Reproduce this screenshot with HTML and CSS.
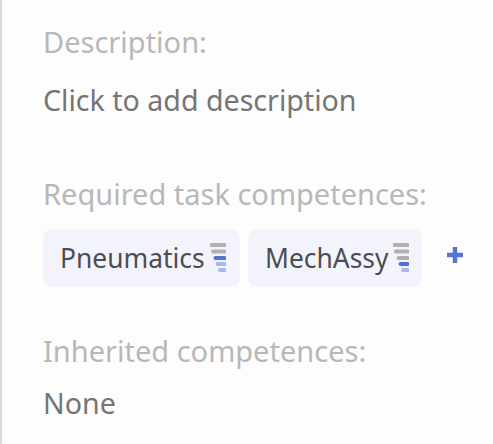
FILE: index.html
```html
<!DOCTYPE html>
<html lang="en">
<head>
<meta charset="utf-8">
<title>Task details</title>
<link rel="stylesheet" href="styles.css">
</head>
<body>
<main class="panel">
  <section class="block block-description">
    <h2 class="label">Description:</h2>
    <p class="value">Click to add description</p>
  </section>
  <section class="block block-required">
    <h2 class="label">Required task competences:</h2>
    <div class="chips">
      <div class="chip chip-first">
        <span class="chip-name">Pneumatics</span>
        <svg class="level" viewBox="0 0 16 32" aria-hidden="true">
          <line class="off" x1="1.5" y1="3" x2="14.5" y2="3"/>
          <line class="off" x1="3" y1="9.5" x2="14.5" y2="9.5"/>
          <line class="on" x1="5.5" y1="16" x2="14.5" y2="16"/>
          <line class="next" x1="7.5" y1="22" x2="14.5" y2="22"/>
          <line class="next" x1="10" y1="28" x2="14.5" y2="28"/>
        </svg>
      </div>
      <div class="chip chip-second">
        <span class="chip-name">MechAssy</span>
        <svg class="level" viewBox="0 0 16 32" aria-hidden="true">
          <line class="off" x1="1.5" y1="3" x2="14.5" y2="3"/>
          <line class="off" x1="3" y1="9.5" x2="14.5" y2="9.5"/>
          <line class="off" x1="5.5" y1="16" x2="14.5" y2="16"/>
          <line class="on" x1="7.5" y1="22" x2="14.5" y2="22"/>
          <line class="next" x1="10" y1="28" x2="14.5" y2="28"/>
        </svg>
      </div>
      <svg class="add" viewBox="0 0 18 18" aria-hidden="true">
        <path d="M9 1v16M1 9h16"/>
      </svg>
    </div>
  </section>
  <section class="block block-inherited">
    <h2 class="label">Inherited competences:</h2>
    <p class="value">None</p>
  </section>
</main>
</body>
</html>
```

FILE: styles.css
```css
* { box-sizing: border-box; }
html, body { margin: 0; height: 100%; }
body {
  background: #fdfdfd;
  font-family: "Noto Sans", "Open Sans", sans-serif;
  overflow: hidden;
}
.panel {
  height: 444px;
  border-left: 2px solid #d8d8d8;
  padding: 23px 0 0 41px;
}
.label {
  margin: 0;
  font-size: 29px;
  line-height: 38px;
  font-weight: 400;
  color: #b8b8b8;
}
.value {
  margin: 0;
  font-size: 28.6px;
  line-height: 38px;
  color: #757575;
}
.block-description .value { margin-top: 20px; }
.block-required { margin-top: 56px; }
.block-inherited { margin-top: 45px; }
.block-inherited .value { margin-top: 14px; }
.chips {
  display: flex;
  align-items: center;
  margin-top: 16px;
}
.chip {
  display: flex;
  align-items: center;
  height: 58px;
  background: #f3f4fb;
  border-radius: 9px;
  padding-left: 17px;
}
.chip-first { width: 197px; }
.chip-second { width: 174px; margin-left: 8px; }
.chip-name {
  font-size: 26.4px;
  line-height: 37px;
  color: #4b4d52;
}
.level {
  width: 16px;
  height: 32px;
  margin-left: 5px;
  fill: none;
  stroke-width: 4;
  stroke-linecap: round;
}
.off { stroke: #b0b0b0; }
.on { stroke: #5573d6; }
.next { stroke: #a8b7ec; }
.add {
  width: 18px;
  height: 18px;
  margin-left: 24px;
  margin-top: -6px;
  fill: none;
  stroke: #5573d6;
  stroke-width: 4.4;
}
```
